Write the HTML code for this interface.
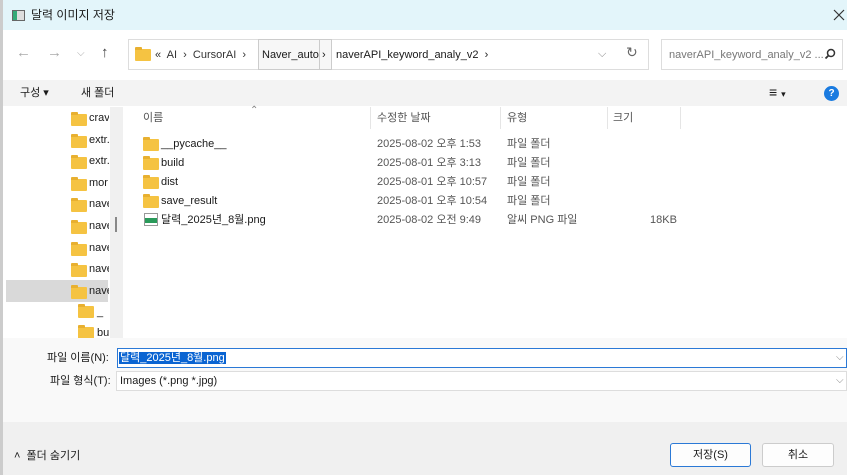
<!DOCTYPE html><html><head><meta charset="utf-8"><style>
*{margin:0;padding:0;box-sizing:border-box}
body{width:847px;height:475px;overflow:hidden;background:#fff;font-family:"Liberation Sans","Noto Sans CJK KR",sans-serif;font-size:11px;line-height:14px;color:#1a1a1a;position:relative}
.a{position:absolute;white-space:nowrap}
.fold{position:absolute;width:16px;height:12px;background:#f5c342;border-radius:1px}
.fold:before{content:"";position:absolute;left:0;top:-2px;width:7px;height:3px;background:#e8b030;border-radius:1px 1px 0 0}
.g{color:#555}
</style></head><body>
<div class="a" style="left:0;top:0;width:3px;height:475px;background:#ccc"></div>
<div class="a" style="left:3px;top:0;width:844px;height:30px;background:#e3f5fa"></div>
<div class="a" style="left:12px;top:10px;width:13px;height:11px;border:1px solid #666;background:#ddd"><div style="width:4px;height:9px;background:#3a7;"></div></div>
<div class="a" style="left:31px;top:8px;font-size:12px">달력 이미지 저장</div>
<svg class="a" style="left:833px;top:9px" width="12" height="12"><path d="M1 1L11 11M11 1L1 11" stroke="#333" stroke-width="1.2"/></svg>
<div class="a" style="left:16px;top:46px;font-size:15px;color:#aaa">←</div>
<div class="a" style="left:47px;top:46px;font-size:15px;color:#aaa">→</div>
<div class="a" style="left:77px;top:47px;font-size:10px;color:#aaa">⌵</div>
<div class="a" style="left:101px;top:46px;font-size:15px;color:#444">↑</div>
<div class="a" style="left:128px;top:39px;width:521px;height:31px;border:1px solid #ddd"></div>
<div class="fold" style="left:135px;top:49px"></div>
<div class="a" style="left:155px;top:48px;color:#333">«&nbsp; AI &nbsp;›&nbsp; CursorAI &nbsp;›</div>
<div class="a" style="left:258px;top:39px;width:62px;height:31px;border:1px solid #ccc;background:#f7f7f7;padding:8px 3px">Naver_auto</div>
<div class="a" style="left:319px;top:39px;width:13px;height:31px;border:1px solid #ccc;background:#f7f7f7;padding:8px 2px">›</div>
<div class="a" style="left:336px;top:48px">naverAPI_keyword_analy_v2 &nbsp;›</div>
<div class="a" style="left:598px;top:47px;color:#888">⌵</div>
<div class="a" style="left:626px;top:45px;color:#666;font-size:14px">↻</div>
<div class="a" style="left:661px;top:39px;width:182px;height:31px;border:1px solid #ddd"></div>
<div class="a" style="left:669px;top:48px;color:#777">naverAPI_keyword_analy_v2 ...</div>
<svg class="a" style="left:824px;top:48px" width="12" height="12"><circle cx="7" cy="5" r="3.5" stroke="#333" stroke-width="1.5" fill="none"/><path d="M4.5 7.5L1.5 10.5" stroke="#333" stroke-width="1.8"/></svg>
<div class="a" style="left:3px;top:80px;width:844px;height:26px;background:#f3f3f3"></div>
<div class="a" style="left:20px;top:86px">구성 ▾</div>
<div class="a" style="left:81px;top:86px">새 폴더</div>
<div class="a" style="left:769px;top:85px;font-size:14px">≡ <span style="font-size:9px">▾</span></div>
<div class="a" style="left:824px;top:86px;width:15px;height:15px;border-radius:50%;background:#1a7be0;color:#fff;font-size:10px;font-weight:bold;text-align:center;line-height:15px">?</div>
<div class="a" style="left:110px;top:107px;width:13px;height:231px;background:#f0f0f0"></div>
<div class="a" style="left:115px;top:217px;width:2px;height:15px;background:#888"></div>
<div class="a" style="left:6px;top:280px;width:102px;height:22px;background:#d9d9d9"></div>
<div id="side"></div>
<div class="a" style="left:3px;top:338px;width:844px;height:90px;background:#f9f9f9"></div>
<div class="a" style="left:3px;top:422px;width:844px;height:53px;background:#f0f0f0"></div>
<div class="a" style="left:143px;top:111px;color:#555">이름</div>
<div class="a" style="left:250px;top:104px;color:#888;font-size:10px">⌃</div>
<div class="a" style="left:377px;top:111px;color:#555">수정한 날짜</div>
<div class="a" style="left:507px;top:111px;color:#555">유형</div>
<div class="a" style="left:613px;top:111px;color:#555">크기</div>
<div class="a" style="left:370px;top:107px;width:1px;height:22px;background:#e5e5e5"></div>
<div class="a" style="left:500px;top:107px;width:1px;height:22px;background:#e5e5e5"></div>
<div class="a" style="left:607px;top:107px;width:1px;height:22px;background:#e5e5e5"></div>
<div class="a" style="left:680px;top:107px;width:1px;height:22px;background:#e5e5e5"></div>
<div class="fold" style="left:143px;top:139px"></div><div class="a" style="left:161px;top:137px">__pycache__</div><div class="a g" style="left:377px;top:137px">2025-08-02 오후 1:53</div><div class="a g" style="left:507px;top:137px">파일 폴더</div>
<div class="fold" style="left:143px;top:158px"></div><div class="a" style="left:161px;top:156px">build</div><div class="a g" style="left:377px;top:156px">2025-08-01 오후 3:13</div><div class="a g" style="left:507px;top:156px">파일 폴더</div>
<div class="fold" style="left:143px;top:177px"></div><div class="a" style="left:161px;top:175px">dist</div><div class="a g" style="left:377px;top:175px">2025-08-01 오후 10:57</div><div class="a g" style="left:507px;top:175px">파일 폴더</div>
<div class="fold" style="left:143px;top:196px"></div><div class="a" style="left:161px;top:194px">save_result</div><div class="a g" style="left:377px;top:194px">2025-08-01 오후 10:54</div><div class="a g" style="left:507px;top:194px">파일 폴더</div>
<div class="a" style="left:144px;top:213px;width:14px;height:13px;border:1px solid #999;background:#fff"><div style="margin-top:4px;height:5px;background:#2a9a5a"></div></div><div class="a" style="left:161px;top:213px">달력_2025년_8월.png</div><div class="a g" style="left:377px;top:213px">2025-08-02 오전 9:49</div><div class="a g" style="left:507px;top:213px">알씨 PNG 파일</div><div class="a g" style="left:650px;top:213px">18KB</div>
<div class="a" style="left:47px;top:351px">파일 이름(N):</div>
<div class="a" style="left:117px;top:348px;width:730px;height:20px;border:1px solid #2b79d6;background:#fff;padding-top:2px"><span style="background:#0a64d2;color:#fff;padding:0 1px;margin-left:1px">달력_2025년_8월.png</span></div>
<div class="a" style="left:836px;top:351px;color:#888;font-size:10px">⌵</div>
<div class="a" style="left:50px;top:374px">파일 형식(T):</div>
<div class="a" style="left:116px;top:371px;width:731px;height:20px;border:1px solid #ddd;background:#fff;padding:2px 3px">Images (*.png *.jpg)</div>
<div class="a" style="left:836px;top:374px;color:#888;font-size:10px">⌵</div>
<div class="a" style="left:14px;top:449px">˄ &nbsp;폴더 숨기기</div>
<div class="a" style="left:670px;top:443px;width:81px;height:24px;border:1px solid #2b79d6;border-radius:3px;background:#fdfdfd;text-align:center;line-height:22px">저장(S)</div>
<div class="a" style="left:762px;top:443px;width:72px;height:24px;border:1px solid #ccc;border-radius:3px;background:#fdfdfd;text-align:center;line-height:22px">취소</div>
<script>
var n=["crav","extr.","extr.","mor","nave","nave","nave","nave","nave"],h="";
n.forEach(function(t,i){var y=111+i*21.6;h+='<div class="fold" style="left:71px;top:'+(y+3)+'px"></div><div class="a" style="left:89px;top:'+y+'px;width:20px;overflow:hidden">'+t+'</div>';});
h+='<div class="fold" style="left:78px;top:306px"></div><div class="a" style="left:97px;top:305px">_</div>';
h+='<div class="fold" style="left:78px;top:327px"></div><div class="a" style="left:97px;top:326px">bu</div>';
document.getElementById("side").innerHTML=h;
</script>
</body></html>
